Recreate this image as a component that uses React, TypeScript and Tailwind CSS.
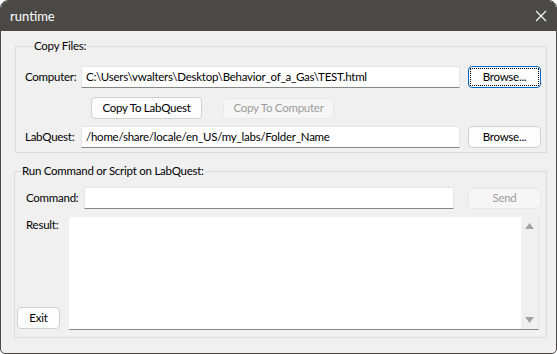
import { useState } from "react"

const font = { fontFamily: 'Lato, "Liberation Sans", sans-serif' }

function Field({ value }: { value: string }) {
  return (
    <div className="flex h-[22px] min-w-0 flex-1 items-center border border-b-[#868686] border-x-[#e6e6e6] border-t-[#e6e6e6] bg-white px-[4px] text-black">
      {value}
    </div>
  )
}

function Button({
  label,
  width,
  disabled,
  focused,
}: {
  label: string
  width: string
  disabled?: boolean
  focused?: boolean
}) {
  if (disabled) {
    return (
      <button className={`flex h-[21px] shrink-0 items-center justify-center rounded-[4px] border border-[#e8e8e8] bg-[#f6f6f6] text-[#9d9d9d] ${width}`}>
        {label}
      </button>
    )
  }

  if (focused) {
    return (
      <button className={`flex h-[22px] shrink-0 items-center justify-center rounded-[4px] border border-[#0067c0] bg-[#fdfdfd] p-[1px] ${width}`}>
        <span className="flex h-full w-full items-center justify-center border border-dotted border-black">
          {label}
        </span>
      </button>
    )
  }

  return (
    <button className={`flex h-[22px] shrink-0 items-center justify-center rounded-[4px] border border-[#d0d0d0] bg-[#fdfdfd] text-black ${width}`}>
      {label}
    </button>
  )
}

export default function App() {
  const [computerPath] = useState(
    "C:\\Users\\vwalters\\Desktop\\Behavior_of_a_Gas\\TEST.html"
  )
  const [labquestPath] = useState(
    "/home/share/locale/en_US/my_labs/Folder_Name"
  )

  return (
    <div
      className="flex h-[354px] w-[557px] flex-col overflow-hidden rounded-t-[8px] rounded-b-[5px] border border-[#4b4946] bg-[#f0f0f0] text-[11.5px] leading-[16px] tracking-[-0.25px] text-black"
      style={font}
    >
      <div className="flex h-[30px] shrink-0 items-center justify-between bg-[#4b4946] pl-[9px] pr-[9px] text-[13px] tracking-normal text-white">
        <span>runtime</span>
        <svg width="12" height="12" viewBox="0 0 12 12">
          <path d="M1 1L11 11M11 1L1 11" stroke="#ffffff" strokeWidth="1.1" />
        </svg>
      </div>

      <div className="flex flex-1 flex-col pl-[13px] pr-[9px] pt-[7px]">
        <fieldset className="ml-[1px] border border-[#dcdcdc] pb-[4px] pl-[9px] pr-[5px]">
          <legend className="ml-[8px] px-[1px]">Copy Files:</legend>

          <div className="mt-[12px] flex items-center">
            <span className="w-[56px] shrink-0">Computer:</span>
            <Field value={computerPath} />
            <div className="ml-[8px]">
              <Button label="Browse..." width="w-[73px]" focused />
            </div>
          </div>

          <div className="mt-[9px] flex items-center">
            <div className="ml-[66px]">
              <Button label="Copy To LabQuest" width="w-[111px]" />
            </div>
            <div className="ml-[21px]">
              <Button label="Copy To Computer" width="w-[111px]" disabled />
            </div>
          </div>

          <div className="mt-[7px] flex items-center">
            <span className="w-[56px] shrink-0">LabQuest:</span>
            <Field value={labquestPath} />
            <div className="ml-[8px]">
              <Button label="Browse..." width="w-[73px]" />
            </div>
          </div>
        </fieldset>

        <fieldset className="mt-[10px] border border-[#dcdcdc] pb-[7px] pl-[2px] pr-[5px]">
          <legend className="ml-[4px] px-[1px]">Run Command or Script on LabQuest:</legend>

          <div className="mt-[8px] flex items-center pl-[9px]">
            <span className="w-[58px] shrink-0">Command:</span>
            <Field value="" />
            <div className="ml-[14px]">
              <Button label="Send" width="w-[73px]" disabled />
            </div>
          </div>

          <div className="mt-[8px] flex h-[113px]">
            <div className="flex w-[52px] shrink-0 flex-col justify-between">
              <span className="pl-[9px]">Result:</span>
              <div className="mb-[1px]">
                <Button label="Exit" width="w-[43px]" />
              </div>
            </div>
            <div className="flex w-[470px] border-b border-b-[#868686] border-r border-r-[#e6e6e6] bg-white">
              <div className="flex-1" />
              <div className="flex w-[17px] flex-col items-center justify-between bg-[#f0f0f0] py-[6px]">
                <svg width="9" height="6" viewBox="0 0 9 6">
                  <path d="M0 6L4.5 0L9 6Z" fill="#a3a3a3" />
                </svg>
                <svg width="9" height="6" viewBox="0 0 9 6">
                  <path d="M0 0L9 0L4.5 6Z" fill="#a3a3a3" />
                </svg>
              </div>
            </div>
          </div>
        </fieldset>
      </div>
    </div>
  )
}
